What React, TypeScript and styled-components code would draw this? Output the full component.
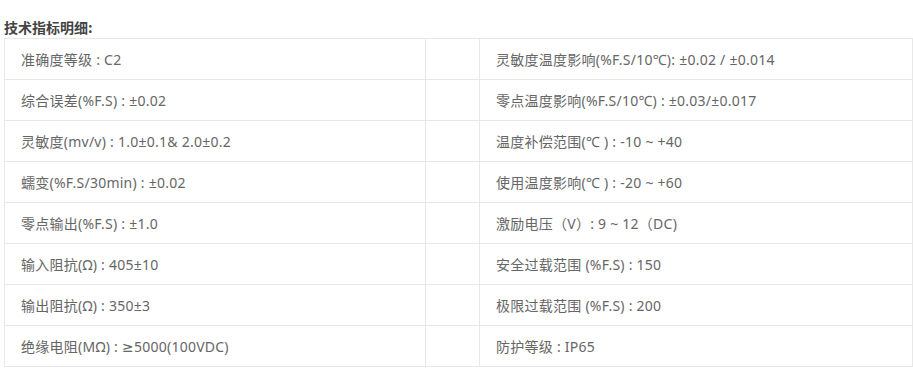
import React from "react";
import styled, { createGlobalStyle } from "styled-components";

const GlobalStyle = createGlobalStyle`
  body {
    margin: 0;
    background: #fff;
    font-family: "Noto Sans", "DejaVu Sans", "Noto Sans CJK SC", sans-serif;
  }
`;

const Wrapper = styled.div`
  padding: 16px 0 0 4px;
  width: 909px;
`;

const Title = styled.div`
  font-size: 14px;
  font-weight: bold;
  color: #444;
  line-height: 22px;
  font-family: "Noto Sans CJK SC", sans-serif;
`;

const Table = styled.table`
  border-collapse: collapse;
  width: 909px;
  table-layout: fixed;
  font-size: 14px;
  letter-spacing: 0.25px;
  color: #666;
`;

const Row = styled.tr`
  height: 41px;
`;

const Cell = styled.td`
  border: 1px solid #e8e8e8;
  padding: 0 0 0 16px;
  white-space: nowrap;
  vertical-align: middle;
`;

const specs: Array<[string, string]> = [
  ["准确度等级 : C2", "灵敏度温度影响(%F.S/10℃): ±0.02 / ±0.014"],
  ["综合误差(%F.S) : ±0.02", "零点温度影响(%F.S/10℃) : ±0.03/±0.017"],
  ["灵敏度(mv/v) : 1.0±0.1& 2.0±0.2", "温度补偿范围(℃ ) : -10 ~ +40"],
  ["蠕变(%F.S/30min) : ±0.02", "使用温度影响(℃ ) : -20 ~ +60"],
  ["零点输出(%F.S) : ±1.0", "激励电压（V）: 9 ~ 12（DC)"],
  ["输入阻抗(Ω) : 405±10", "安全过载范围 (%F.S) : 150"],
  ["输出阻抗(Ω) : 350±3", "极限过载范围 (%F.S) : 200"],
  ["绝缘电阻(MΩ) : ≥5000(100VDC)", "防护等级 : IP65"],
];

const App: React.FC = () => {
  return (
    <Wrapper>
      <GlobalStyle />
      <Title>技术指标明细:</Title>
      <Table>
        <colgroup>
          <col style={{ width: 421 }} />
          <col style={{ width: 54 }} />
          <col />
        </colgroup>
        <tbody>
          {specs.map(([left, right], index) => (
            <Row key={index}>
              <Cell>{left}</Cell>
              <Cell />
              <Cell>{right}</Cell>
            </Row>
          ))}
        </tbody>
      </Table>
    </Wrapper>
  );
};

export default App;
